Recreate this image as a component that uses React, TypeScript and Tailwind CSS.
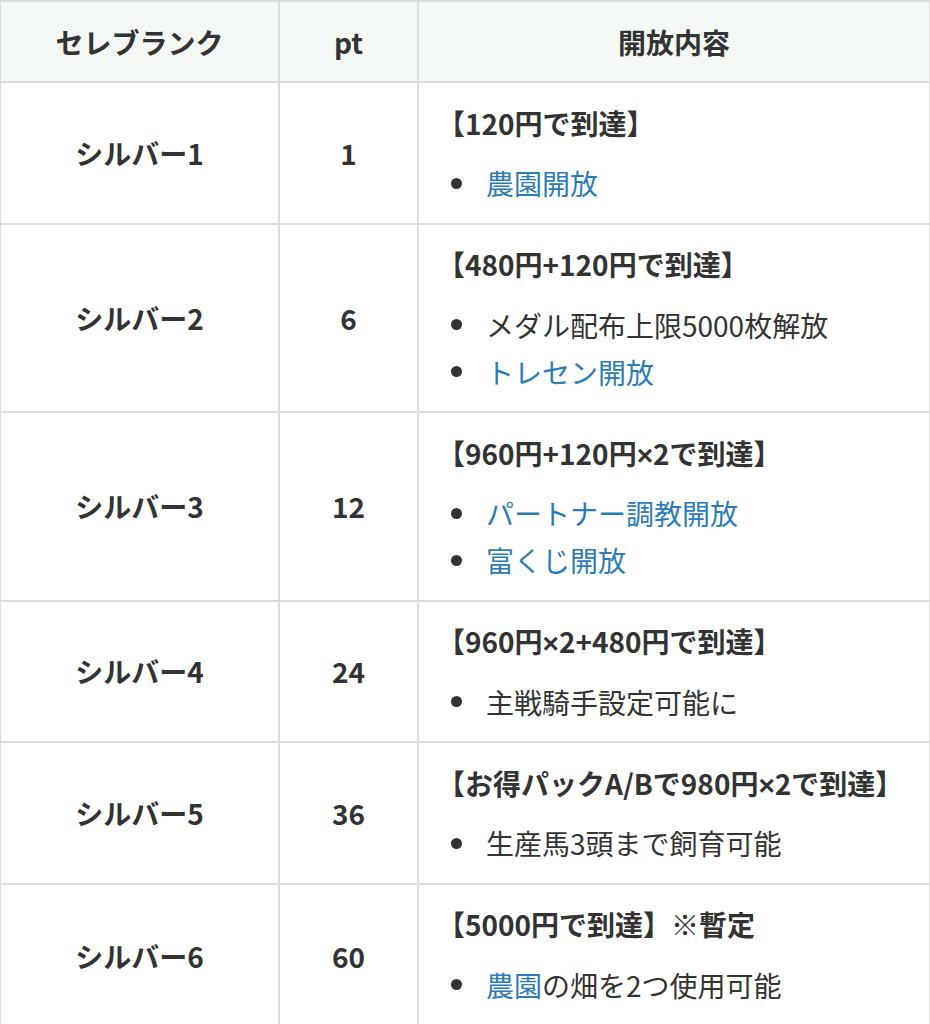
import React from "react";

type Item = { parts: { text: string; link?: boolean }[] };
type Row = { rank: string; pt: string; head: string; items: Item[] };

const rows: Row[] = [
  { rank: "シルバー1", pt: "1", head: "【120円で到達】", items: [{ parts: [{ text: "農園開放", link: true }] }] },
  {
    rank: "シルバー2",
    pt: "6",
    head: "【480円+120円で到達】",
    items: [
      { parts: [{ text: "メダル配布上限5000枚解放" }] },
      { parts: [{ text: "トレセン開放", link: true }] },
    ],
  },
  {
    rank: "シルバー3",
    pt: "12",
    head: "【960円+120円×2で到達】",
    items: [
      { parts: [{ text: "パートナー調教開放", link: true }] },
      { parts: [{ text: "富くじ開放", link: true }] },
    ],
  },
  { rank: "シルバー4", pt: "24", head: "【960円×2+480円で到達】", items: [{ parts: [{ text: "主戦騎手設定可能に" }] }] },
  { rank: "シルバー5", pt: "36", head: "【お得パックA/Bで980円×2で到達】", items: [{ parts: [{ text: "生産馬3頭まで飼育可能" }] }] },
  {
    rank: "シルバー6",
    pt: "60",
    head: "【5000円で到達】※暫定",
    items: [{ parts: [{ text: "農園", link: true }, { text: "の畑を2つ使用可能" }] }],
  },
];

// the × in the reference is the narrow latin one
const Head = ({ text }: { text: string }) => {
  const bits = text.split("×");
  return (
    <>
      {bits.map((b, i) => (
        <React.Fragment key={i}>
          {i > 0 && <span className="font-['Liberation_Sans',sans-serif] leading-none">×</span>}
          {b}
        </React.Fragment>
      ))}
    </>
  );
};

export default function App() {
  return (
    <div className="w-[930px] h-[1024px] overflow-hidden bg-white text-[#333] font-['Hiragino_Sans','Noto_Sans_CJK_JP',sans-serif] text-[28px]">
      <table className="w-[932px] -ml-[1px] border-collapse table-fixed">
        <colgroup>
          <col className="w-[279px]" />
          <col className="w-[139px]" />
          <col />
        </colgroup>
        <thead>
          <tr className="bg-[#f3f8f5] h-[81px]">
            <th className="border-2 border-[#dddddd] font-bold">セレブランク</th>
            <th className="border-2 border-[#dddddd] font-bold">pt</th>
            <th className="border-2 border-[#dddddd] font-bold">開放内容</th>
          </tr>
        </thead>
        <tbody>
          {rows.map((r, idx) => (
            <tr key={r.rank}>
              <td className="border-2 border-[#dddddd] text-center font-bold">{r.rank}</td>
              <td className="border-2 border-[#dddddd] text-center font-bold">{r.pt}</td>
              <td
                className={
                  idx === rows.length - 1
                    ? "border-2 border-[#dddddd] pl-[28px] pr-2 pt-[16.5px] pb-[20px]"
                    : "border-2 border-[#dddddd] pl-[28px] pr-2 pt-[16.5px] pb-[16px]"
                }
              >
                <div className="font-bold leading-[47px] whitespace-nowrap -ml-[10px]">
                  <Head text={r.head} />
                </div>
                <ul className="mt-[13px]">
                  {r.items.map((it, i) => (
                    <li key={i} className="flex items-center h-[47px] whitespace-nowrap">
                      <span className="w-[11px] h-[11px] rounded-full bg-[#333] ml-[4px] mr-[24px] shrink-0" />
                      <span>
                        {it.parts.map((p, j) =>
                          p.link ? (
                            <span key={j} className="text-[#2b7bb9]">
                              {p.text}
                            </span>
                          ) : (
                            <span key={j}>{p.text}</span>
                          )
                        )}
                      </span>
                    </li>
                  ))}
                </ul>
              </td>
            </tr>
          ))}
        </tbody>
      </table>
    </div>
  );
}
